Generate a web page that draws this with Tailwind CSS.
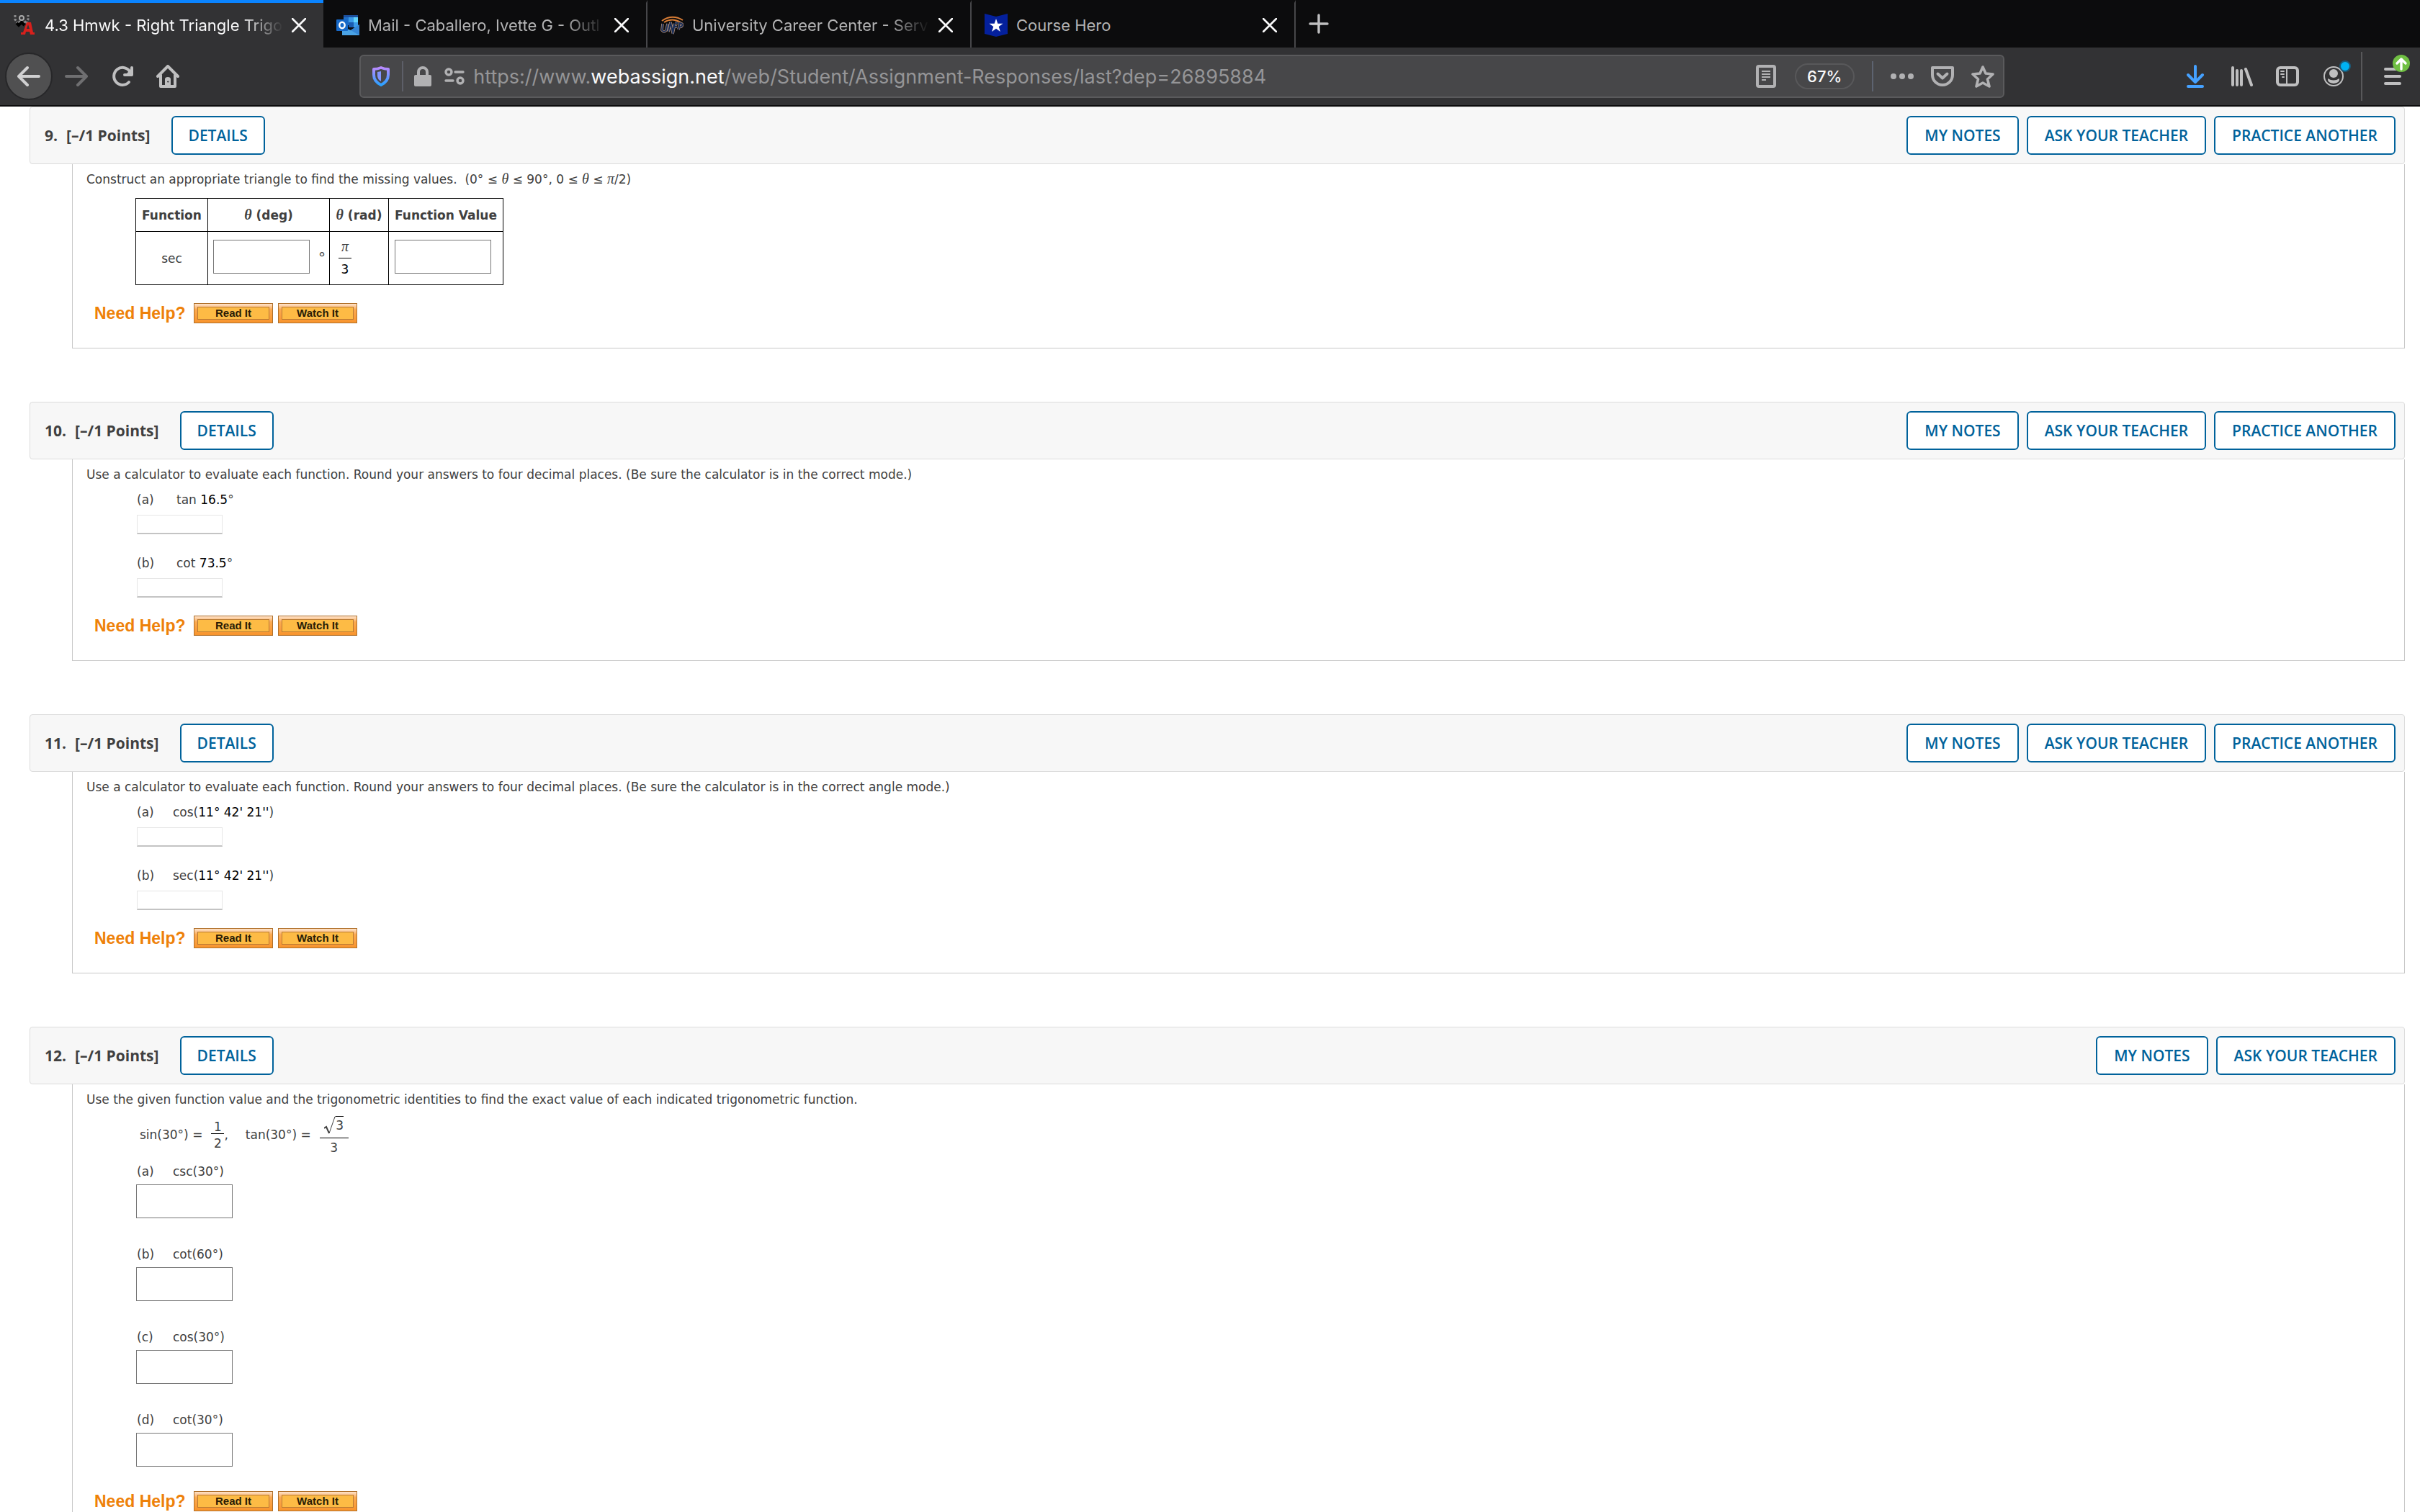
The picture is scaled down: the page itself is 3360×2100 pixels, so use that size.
<!DOCTYPE html>
<html lang="en">
<head>
    <meta charset="UTF-8">
    <meta name="viewport" content="width=device-width, initial-scale=1.0">
    <title>4.3 Hmwk - Right Triangle Trigonometry</title>
    <script src="https://cdn.jsdelivr.net/npm/@tailwindcss/browser@4"></script>
</head>
<body class="bg-white text-[#404040] min-h-screen overflow-hidden font-['DejaVu_Sans',sans-serif] text-[17px] leading-[35px]">
    <!-- Browser chrome -->
    <header class="font-['Inter',sans-serif] bg-[#323234] border-b-2 border-[#0c0c0d]">
        <!-- Tabs -->
        <nav class="flex h-[66px] bg-[#0c0c0d] text-[22px] leading-8 text-[#b4b4b5]">
            <div class="w-[449px] flex items-center gap-3 pl-[18px] pr-6 bg-[#323234] border-t-4 border-[#0a84ff] text-[#f9f9fa]">
                <svg class="size-8 shrink-0" viewBox="0 0 32 32">
                    <path d="M3 2v6l4 6 3-4 3 5 3-5 3 4 2-6V2" fill="none" stroke="#8b8b8c" stroke-width="3" stroke-dasharray="3 2"/>
                    <path d="M5 13l3 3 4-4 4 4" fill="none" stroke="#000" stroke-width="4"/>
                    <circle cx="12" cy="6" r="3" fill="none" stroke="#aaa" stroke-width="2"/>
                    <path d="M11 29h6l1-4h5l1 4h6v-3h-2L25 12h-6l-5 14h-3zM19 21l2-6 2 6z" fill="#d8201c"/>
                </svg>
                <span class="flex-1 overflow-hidden whitespace-nowrap [mask-image:linear-gradient(to_right,black_83%,transparent)]">4.3 Hmwk - Right Triangle Trigo</span>
                <button aria-label="Close tab"><svg class="size-5" viewBox="0 0 20 20" fill="none" stroke="#f9f9fa" stroke-width="2.6" stroke-linecap="round"><path d="M1 1l18 18M19 1L1 19"/></svg></button>
            </div>
            <div class="w-[450px] flex items-center gap-3 pl-[18px] pr-6 border-t-4 border-t-transparent border-r-2 border-r-[#47474a]">
                <svg class="size-8 shrink-0" viewBox="0 0 32 32">
                    <path d="M10 2h20v14H10z" fill="#1f6fc9"/>
                    <path d="M10 2h20v3H10z" fill="#1c4f9c"/>
                    <path d="M17 5h7v7h-7z" fill="#3b9be8"/><path d="M24 5h6v7h-6z" fill="#63d3fb"/>
                    <path d="M17 12h7v7h-7z" fill="#1a5cb0"/><path d="M24 12h6v7h-6z" fill="#3b9be8"/>
                    <path d="M8 18l12 5 12-8v15H8z" fill="#4aa3e6"/><path d="M20 23l12-8v15z" fill="#3586d6"/>
                    <rect x="0" y="8" width="16" height="16" rx="1" fill="#1769c8"/>
                    <ellipse cx="8" cy="16" rx="3.7" ry="4.2" fill="none" stroke="#fff" stroke-width="2.4"/>
                </svg>
                <span class="flex-1 overflow-hidden whitespace-nowrap [mask-image:linear-gradient(to_right,black_83%,transparent)]">Mail - Caballero, Ivette G - Outl</span>
                <button aria-label="Close tab"><svg class="size-5" viewBox="0 0 20 20" fill="none" stroke="#f9f9fa" stroke-width="2.6" stroke-linecap="round"><path d="M1 1l18 18M19 1L1 19"/></svg></button>
            </div>
            <div class="w-[450px] flex items-center gap-3 pl-[18px] pr-6 border-t-4 border-t-transparent border-r-2 border-r-[#47474a]">
                <svg class="size-8 shrink-0" viewBox="0 0 32 32" fill="none">
                    <path d="M2 10Q16 0 31 9M5 12Q16 5 28 12" stroke="#d97d35" stroke-width="2"/>
                    <path d="M3 14l-1 9q3 4 6 0l2-9M11 25l3-13 3 14 2-12M20 14l-3 14M20 13h4M19 18h4M25 22l2-9q6 1 2 5l-4 1" stroke="#a98a78" stroke-width="3.6"/>
                    <path d="M3 14l-1 9q3 4 6 0l2-9M11 25l3-13 3 14 2-12M20 14l-3 14M20 13h4M19 18h4M25 22l2-9q6 1 2 5l-4 1" stroke="#1b2f57" stroke-width="2"/>
                </svg>
                <span class="flex-1 overflow-hidden whitespace-nowrap [mask-image:linear-gradient(to_right,black_83%,transparent)]">University Career Center - Serv</span>
                <button aria-label="Close tab"><svg class="size-5" viewBox="0 0 20 20" fill="none" stroke="#f9f9fa" stroke-width="2.6" stroke-linecap="round"><path d="M1 1l18 18M19 1L1 19"/></svg></button>
            </div>
            <div class="w-[450px] flex items-center gap-3 pl-[18px] pr-6 border-t-4 border-t-transparent border-r-2 border-r-[#47474a]">
                <svg class="size-8 shrink-0" viewBox="0 0 32 32">
                    <path d="M0 0l16 4 16-4v28l-16 4-16-4z" fill="#04209c"/>
                    <path d="M16 7l2.3 6.8h7.2l-5.800 4.300 2.200 6.900L16 20.800 10.100 25l2.200-6.900-5.800-4.300h7.200z" fill="#fff"/>
                </svg>
                <span class="flex-1 overflow-hidden whitespace-nowrap">Course Hero</span>
                <button aria-label="Close tab"><svg class="size-5" viewBox="0 0 20 20" fill="none" stroke="#f9f9fa" stroke-width="2.6" stroke-linecap="round"><path d="M1 1l18 18M19 1L1 19"/></svg></button>
            </div>
            <button class="pl-[18px]" aria-label="New tab"><svg class="size-7" viewBox="0 0 28 28" fill="none" stroke="#bfbfc0" stroke-width="3.4" stroke-linecap="round"><path d="M14 2v24M2 14h24"/></svg></button>
        </nav>

        <!-- Toolbar -->
        <div class="flex items-center h-20 pl-[7px] pr-[26px] text-[#bfbfc0]">
            <button class="size-[66px] rounded-full bg-[#505051] border-2 border-[#272729] flex items-center justify-center" aria-label="Back">
                <svg class="size-8" viewBox="0 0 32 32" fill="none" stroke="#d0d0d1" stroke-width="4" stroke-linecap="round" stroke-linejoin="round"><path d="M30 16H3M14 4L2 16l12 12"/></svg>
            </button>
            <button class="ml-[17px]" aria-label="Forward">
                <svg class="size-8" viewBox="0 0 32 32" fill="none" stroke="#6f6f71" stroke-width="4" stroke-linecap="round" stroke-linejoin="round"><path d="M2 16h27M18 4l12 12-12 12"/></svg>
            </button>
            <button class="ml-8" aria-label="Reload">
                <svg class="size-8" viewBox="0 0 32 32" fill="none" stroke="currentColor" stroke-width="4" stroke-linecap="round"><path d="M25 24A12 12 0 1 1 26 9"/><path d="M29 4v10H19" stroke-linejoin="round"/><path d="M29 5v9H20z" fill="currentColor" stroke="none"/></svg>
            </button>
            <button class="ml-[31px]" aria-label="Home">
                <svg class="size-8" viewBox="0 0 32 32" fill="none" stroke="currentColor" stroke-width="4" stroke-linecap="round" stroke-linejoin="round"><path d="M2 16L16 2l14 14M6 14v16h20V14"/><path d="M12 30V20q0-3 4-3t4 3v10z" fill="currentColor" stroke="none"/><path d="M16 23h1v1h-1z" stroke="#323234" stroke-width="1"/></svg>
            </button>
            <div class="flex-1"></div>
            <div class="flex-[9] h-[60px] flex items-center rounded-md bg-[#474749] border-2 border-[#5a5a5c] pl-[15px] pr-3 text-[#b1b1b3]">
                <svg class="w-[26px] h-7 shrink-0" viewBox="0 0 26 28">
                    <defs><linearGradient id="shield" x1="0" y1="0" x2="0" y2="1"><stop offset="0" stop-color="#b98aff"/><stop offset="1" stop-color="#2aa0ff"/></linearGradient></defs>
                    <path d="M13 2q5 2 10 2v8q0 9-10 14Q3 21 3 12V4q5 0 10-2z" fill="none" stroke="url(#shield)" stroke-width="4" stroke-linejoin="round"/>
                    <path d="M13 7l-5 1v5q0 5 5 8z" fill="#8294ff"/>
                </svg>
                <span class="w-[2px] h-[42px] ml-4 bg-[#5d5f68]"></span>
                <svg class="w-6 h-7 ml-[15px] shrink-0" viewBox="0 0 24 28"><rect y="12" width="24" height="16" rx="2" fill="currentColor"/><path d="M6 14V8a6 6 0 0 1 12 0v6" fill="none" stroke="currentColor" stroke-width="4"/></svg>
                <svg class="w-7 h-6 ml-[18px] shrink-0" viewBox="0 0 28 24" fill="none" stroke="currentColor" stroke-width="3.400" stroke-linecap="round"><circle cx="6" cy="6" r="4"/><path d="M15 6h11M2 18h10"/><circle cx="22" cy="18" r="4"/></svg>
                <div role="textbox" aria-label="Address" contenteditable="true" class="flex-1 ml-3 pt-0.5 text-[27px] leading-8 text-[#959597] whitespace-nowrap">https://www.<span class="text-[#f9f9fa]">webassign.net</span>/web/Student/Assignment-Responses/last?dep=26895884</div>
                <button aria-label="Reader view"><svg class="w-7 h-8" viewBox="0 0 28 32" fill="none" stroke="currentColor"><rect x="2" y="2" width="24" height="28" rx="2" stroke-width="4"/><path d="M8 9h12M8 13h12M8 17h12M8 21h6" stroke-width="2"/></svg></button>
                <button class="ml-[26px] w-[83px] h-9 rounded-full border-2 border-[#58585a] text-[22px] leading-8 font-medium text-[#f9f9fa]">67%</button>
                <span class="w-[2px] h-[42px] ml-6 bg-[#5d6370]"></span>
                <button class="ml-6" aria-label="Page actions"><svg class="w-8 h-8" viewBox="0 0 32 32" fill="currentColor"><circle cx="4" cy="16" r="4"/><circle cx="16" cy="16" r="4"/><circle cx="28" cy="16" r="4"/></svg></button>
                <button class="ml-6" aria-label="Save to Pocket"><svg class="size-8" viewBox="0 0 32 32" fill="none" stroke="currentColor" stroke-width="4" stroke-linecap="round" stroke-linejoin="round"><path d="M2 4h28v10a14 14 0 0 1-28 0z"/><path d="M9.500 12.500l6.500 6 6.500-6"/></svg></button>
                <button class="ml-6" aria-label="Bookmark"><svg class="size-8" viewBox="0 0 32 32" fill="none" stroke="currentColor" stroke-width="3.600" stroke-linejoin="round"><path d="M16 3l4 9 10 1-7.500 7L25 30l-9-5-9 5 2.500-10L2 13l10-1z"/></svg></button>
            </div>
            <div class="flex-1"></div>
            <button class="ml-[3px]" aria-label="Downloads"><svg class="w-6 h-8" viewBox="0 0 24 32" fill="none" stroke="#45a1ff" stroke-width="4" stroke-linecap="round" stroke-linejoin="round"><path d="M12 2v22M2 14l10 10 10-10M2 30h20"/></svg></button>
            <button class="ml-[37px]" aria-label="Library"><svg class="w-8 h-7" viewBox="0 0 32 28" fill="none" stroke="currentColor" stroke-width="4" stroke-linecap="round"><path d="M3 2v24M9 6v20M15 6v20M21 4l8 22"/></svg></button>
            <button class="ml-[31px]" aria-label="Sidebar"><svg class="w-8 h-7" viewBox="0 0 32 28" fill="none" stroke="currentColor" stroke-linecap="round"><rect x="2" y="2" width="28" height="24" rx="4" stroke-width="4"/><path d="M15 4v20M7 7h4M7 11h4M9 15h2" stroke-width="2"/></svg></button>
            <button class="relative ml-[34px]" aria-label="Account">
                <svg class="size-7" viewBox="0 0 28 28"><circle cx="14" cy="14" r="13" fill="none" stroke="currentColor" stroke-width="2"/><circle cx="14" cy="10" r="6" fill="currentColor"/><path d="M6 17q8 5 16 0 1 6-8 7-9-1-8-7z" fill="currentColor"/></svg>
                <span class="absolute -top-2 -right-2.5 size-4 rounded-full border-2 border-[#1c5a78] bg-[#00b3f4]"></span>
            </button>
            <span class="w-[2px] h-[68px] ml-6 bg-[#58585a]"></span>
            <button class="relative ml-[30px]" aria-label="Menu">
                <svg class="w-6 h-6" viewBox="0 0 24 24" stroke="currentColor" stroke-width="4" stroke-linecap="round"><path d="M2 2h20M2 12h20M2 22h20"/></svg>
                <svg class="absolute -top-[18px] -right-3 size-6" viewBox="0 0 24 24" fill="none"><circle cx="12" cy="12" r="12" fill="#70bf43"/><path d="M12 20V6M6 12l6-6 6 6" stroke="#fff" stroke-width="3.400" stroke-linecap="round" stroke-linejoin="round"/></svg>
            </button>
        </div>
    </header>

    <!-- Questions -->
    <main class="ml-[41px] mr-[21px] flex flex-col gap-[74px]">
        <!-- Question 9 -->
        <section>
            <div class="flex items-center h-20 pl-5 pr-3 border border-[#dcdcdc] rounded-sm bg-[#f7f7f7] font-['Open_Sans',sans-serif] text-[21px]">
                <h2 class="flex gap-3 font-bold"><span>9.</span><span>[–/1 Points]</span></h2>
                <button class="ml-[29px] h-[54px] px-[22px] rounded-md border-2 border-[#00629b] bg-white text-[#00629b] font-semibold">DETAILS</button>
                <div class="ml-auto flex gap-[11px] text-[#00629b] font-semibold">
                    <button class="h-[54px] px-[23px] rounded-md border-2 border-[#00629b] bg-white">MY NOTES</button>
                    <button class="h-[54px] px-[23px] rounded-md border-2 border-[#00629b] bg-white">ASK YOUR TEACHER</button>
                    <button class="h-[54px] px-[23px] rounded-md border-2 border-[#00629b] bg-white">PRACTICE ANOTHER</button>
                </div>
            </div>
            <div class="ml-[59px] pl-[19px] pt-1 pb-[34px] border border-t-0 border-[#c8c8c8]">
                <p>Construct an appropriate triangle to find the missing values.&nbsp; (0° ≤ <i class="font-['Liberation_Serif',serif] text-[20px] leading-none">θ</i> ≤ 90°, 0 ≤ <i class="font-['Liberation_Serif',serif] text-[20px] leading-none">θ</i> ≤ <i class="font-['Liberation_Serif',serif] text-[20px] leading-none">π</i>/2)</p>
                <table class="ml-[68px] mt-2 border-collapse text-center">
                    <thead>
                        <tr class="h-[46px]">
                            <th class="w-[100px] pt-0.5 border border-black">Function</th>
                            <th class="w-[169px] pt-0.5 border border-black"><i class="font-['Liberation_Serif',serif] text-[20px] leading-none">θ</i> (deg)</th>
                            <th class="w-[82px] pt-0.5 border border-black"><i class="font-['Liberation_Serif',serif] text-[20px] leading-none">θ</i> (rad)</th>
                            <th class="w-[159px] pt-0.5 border border-black">Function Value</th>
                        </tr>
                    </thead>
                    <tbody>
                        <tr class="h-[74px]">
                            <td class="pt-0.5 border border-black">sec</td>
                            <td class="border border-black">
                                <div class="flex items-center pl-[7px] pb-1 gap-3">
                                    <input type="text" aria-label="Theta in degrees" class="w-[134px] h-[47px] border border-[#767676]">
                                    <span class="pt-1 text-[20px]">°</span>
                                </div>
                            </td>
                            <td class="border border-black">
                                <div class="w-[18px] ml-3 leading-[22px]">
                                    <div class="border-b border-black pb-1"><i class="font-['Liberation_Serif',serif] text-[20px] leading-none">π</i></div>
                                    <div class="text-black pt-1">3</div>
                                </div>
                            </td>
                            <td class="border border-black">
                                <div class="flex pl-2 pb-1">
                                    <input type="text" aria-label="Function value" class="w-[134px] h-[47px] border border-[#767676]">
                                </div>
                            </td>
                        </tr>
                    </tbody>
                </table>
                <div class="flex items-center h-7 mt-[25px] ml-[11px] gap-[7px] font-['Liberation_Sans',sans-serif] font-bold">
                    <span class="w-[131px] text-[23px] text-[#ee8109]">Need Help?</span>
                    <button class="w-[110px] h-7 p-1 border border-[#b0702a] bg-linear-to-b from-[#fde3cb] via-[#fbaa50] via-30% to-[#f8942c] text-[15px] leading-4 text-[#2a1c05]"><span class="block border border-[#b97a33] bg-[#fdbb45]">Read It</span></button>
                    <button class="w-[110px] h-7 p-1 border border-[#b0702a] bg-linear-to-b from-[#fde3cb] via-[#fbaa50] via-30% to-[#f8942c] text-[15px] leading-4 text-[#2a1c05]"><span class="block border border-[#b97a33] bg-[#fdbb45]">Watch It</span></button>
                </div>
            </div>
        </section>

        <!-- Question 10 -->
        <section>
            <div class="flex items-center h-20 pl-5 pr-3 border border-[#dcdcdc] rounded-sm bg-[#f7f7f7] font-['Open_Sans',sans-serif] text-[21px]">
                <h2 class="flex gap-3 font-bold"><span>10.</span><span>[–/1 Points]</span></h2>
                <button class="ml-[29px] h-[54px] px-[22px] rounded-md border-2 border-[#00629b] bg-white text-[#00629b] font-semibold">DETAILS</button>
                <div class="ml-auto flex gap-[11px] text-[#00629b] font-semibold">
                    <button class="h-[54px] px-[23px] rounded-md border-2 border-[#00629b] bg-white">MY NOTES</button>
                    <button class="h-[54px] px-[23px] rounded-md border-2 border-[#00629b] bg-white">ASK YOUR TEACHER</button>
                    <button class="h-[54px] px-[23px] rounded-md border-2 border-[#00629b] bg-white">PRACTICE ANOTHER</button>
                </div>
            </div>
            <div class="ml-[59px] pl-[19px] pt-1 pb-[34px] border border-t-0 border-[#c8c8c8]">
                <p>Use a calculator to evaluate each function. Round your answers to four decimal places. (Be sure the calculator is in the correct mode.)</p>
                <div class="ml-[70px] flex flex-col items-start gap-[23px]">
                    <div>
                        <label for="q10a" class="flex"><span class="w-[55px]">(a)</span><span>tan <span class="text-black">16.5</span>°</span></label>
                        <input id="q10a" type="text" class="block mt-[3px] w-[119px] h-[27px] border border-[#e6e6e6] border-b-2 border-b-[#c4c4c4]">
                    </div>
                    <div>
                        <label for="q10b" class="flex"><span class="w-[55px]">(b)</span><span>cot <span class="text-black">73.5</span>°</span></label>
                        <input id="q10b" type="text" class="block mt-[3px] w-[119px] h-[27px] border border-[#e6e6e6] border-b-2 border-b-[#c4c4c4]">
                    </div>
                </div>
                <div class="flex items-center h-7 mt-[25px] ml-[11px] gap-[7px] font-['Liberation_Sans',sans-serif] font-bold">
                    <span class="w-[131px] text-[23px] text-[#ee8109]">Need Help?</span>
                    <button class="w-[110px] h-7 p-1 border border-[#b0702a] bg-linear-to-b from-[#fde3cb] via-[#fbaa50] via-30% to-[#f8942c] text-[15px] leading-4 text-[#2a1c05]"><span class="block border border-[#b97a33] bg-[#fdbb45]">Read It</span></button>
                    <button class="w-[110px] h-7 p-1 border border-[#b0702a] bg-linear-to-b from-[#fde3cb] via-[#fbaa50] via-30% to-[#f8942c] text-[15px] leading-4 text-[#2a1c05]"><span class="block border border-[#b97a33] bg-[#fdbb45]">Watch It</span></button>
                </div>
            </div>
        </section>

        <!-- Question 11 -->
        <section>
            <div class="flex items-center h-20 pl-5 pr-3 border border-[#dcdcdc] rounded-sm bg-[#f7f7f7] font-['Open_Sans',sans-serif] text-[21px]">
                <h2 class="flex gap-3 font-bold"><span>11.</span><span>[–/1 Points]</span></h2>
                <button class="ml-[29px] h-[54px] px-[22px] rounded-md border-2 border-[#00629b] bg-white text-[#00629b] font-semibold">DETAILS</button>
                <div class="ml-auto flex gap-[11px] text-[#00629b] font-semibold">
                    <button class="h-[54px] px-[23px] rounded-md border-2 border-[#00629b] bg-white">MY NOTES</button>
                    <button class="h-[54px] px-[23px] rounded-md border-2 border-[#00629b] bg-white">ASK YOUR TEACHER</button>
                    <button class="h-[54px] px-[23px] rounded-md border-2 border-[#00629b] bg-white">PRACTICE ANOTHER</button>
                </div>
            </div>
            <div class="ml-[59px] pl-[19px] pt-1 pb-[34px] border border-t-0 border-[#c8c8c8]">
                <p>Use a calculator to evaluate each function. Round your answers to four decimal places. (Be sure the calculator is in the correct angle mode.)</p>
                <div class="ml-[70px] flex flex-col items-start gap-[23px]">
                    <div>
                        <label for="q11a" class="flex"><span class="w-[50px]">(a)</span><span>cos(<span class="text-black">11° 42' 21''</span>)</span></label>
                        <input id="q11a" type="text" class="block mt-[3px] w-[119px] h-[27px] border border-[#e6e6e6] border-b-2 border-b-[#c4c4c4]">
                    </div>
                    <div>
                        <label for="q11b" class="flex"><span class="w-[50px]">(b)</span><span>sec(<span class="text-black">11° 42' 21''</span>)</span></label>
                        <input id="q11b" type="text" class="block mt-[3px] w-[119px] h-[27px] border border-[#e6e6e6] border-b-2 border-b-[#c4c4c4]">
                    </div>
                </div>
                <div class="flex items-center h-7 mt-[25px] ml-[11px] gap-[7px] font-['Liberation_Sans',sans-serif] font-bold">
                    <span class="w-[131px] text-[23px] text-[#ee8109]">Need Help?</span>
                    <button class="w-[110px] h-7 p-1 border border-[#b0702a] bg-linear-to-b from-[#fde3cb] via-[#fbaa50] via-30% to-[#f8942c] text-[15px] leading-4 text-[#2a1c05]"><span class="block border border-[#b97a33] bg-[#fdbb45]">Read It</span></button>
                    <button class="w-[110px] h-7 p-1 border border-[#b0702a] bg-linear-to-b from-[#fde3cb] via-[#fbaa50] via-30% to-[#f8942c] text-[15px] leading-4 text-[#2a1c05]"><span class="block border border-[#b97a33] bg-[#fdbb45]">Watch It</span></button>
                </div>
            </div>
        </section>

        <!-- Question 12 -->
        <section>
            <div class="flex items-center h-20 pl-5 pr-3 border border-[#dcdcdc] rounded-sm bg-[#f7f7f7] font-['Open_Sans',sans-serif] text-[21px]">
                <h2 class="flex gap-3 font-bold"><span>12.</span><span>[–/1 Points]</span></h2>
                <button class="ml-[29px] h-[54px] px-[22px] rounded-md border-2 border-[#00629b] bg-white text-[#00629b] font-semibold">DETAILS</button>
                <div class="ml-auto flex gap-[11px] text-[#00629b] font-semibold">
                    <button class="h-[54px] px-[23px] rounded-md border-2 border-[#00629b] bg-white">MY NOTES</button>
                    <button class="h-[54px] px-[23px] rounded-md border-2 border-[#00629b] bg-white">ASK YOUR TEACHER</button>
                </div>
            </div>
            <div class="ml-[59px] pl-[19px] pt-1 pb-[34px] border border-t-0 border-[#c8c8c8]">
                <p>Use the given function value and the trigonometric identities to find the exact value of each indicated trigonometric function.</p>
                <div class="flex items-center h-[65px] pb-0.5 ml-[74px]">
                    <span>sin(30°) =</span>
                    <span class="ml-3 w-[18px] text-center leading-[18px]">
                        <span class="block border-b border-black">1</span>
                        <span class="block pt-1">2</span>
                    </span>
                    <span>,</span>
                    <span class="ml-6">tan(30°) =</span>
                    <span class="ml-3 w-10 text-center leading-[18px]">
                        <span class="flex justify-center pb-1.5 border-b border-black">
                            <svg class="w-4 h-7 -mb-1" viewBox="0 0 16 28" fill="none" stroke="#404040"><path d="M0 17l3-2 4 9" stroke-width="2"/><path d="M7 24L15 1h1" stroke-width="1"/></svg>
                            <span class="border-t border-black pt-[3px]">3</span>
                        </span>
                        <span class="block pt-1">3</span>
                    </span>
                </div>
                <div class="ml-[69px] flex flex-col items-start gap-[33px]">
                    <div>
                        <label for="q12a" class="flex pl-px"><span class="w-[50px]">(a)</span><span>csc(30°)</span></label>
                        <input id="q12a" type="text" class="block w-[134px] h-[47px] border border-[#767676]">
                    </div>
                    <div>
                        <label for="q12b" class="flex pl-px"><span class="w-[50px]">(b)</span><span>cot(60°)</span></label>
                        <input id="q12b" type="text" class="block w-[134px] h-[47px] border border-[#767676]">
                    </div>
                    <div>
                        <label for="q12c" class="flex pl-px"><span class="w-[50px]">(c)</span><span>cos(30°)</span></label>
                        <input id="q12c" type="text" class="block w-[134px] h-[47px] border border-[#767676]">
                    </div>
                    <div>
                        <label for="q12d" class="flex pl-px"><span class="w-[50px]">(d)</span><span>cot(30°)</span></label>
                        <input id="q12d" type="text" class="block w-[134px] h-[47px] border border-[#767676]">
                    </div>
                </div>
                <div class="flex items-center h-7 mt-[34px] ml-[11px] gap-[7px] font-['Liberation_Sans',sans-serif] font-bold">
                    <span class="w-[131px] text-[23px] text-[#ee8109]">Need Help?</span>
                    <button class="w-[110px] h-7 p-1 border border-[#b0702a] bg-linear-to-b from-[#fde3cb] via-[#fbaa50] via-30% to-[#f8942c] text-[15px] leading-4 text-[#2a1c05]"><span class="block border border-[#b97a33] bg-[#fdbb45]">Read It</span></button>
                    <button class="w-[110px] h-7 p-1 border border-[#b0702a] bg-linear-to-b from-[#fde3cb] via-[#fbaa50] via-30% to-[#f8942c] text-[15px] leading-4 text-[#2a1c05]"><span class="block border border-[#b97a33] bg-[#fdbb45]">Watch It</span></button>
                </div>
            </div>
        </section>
    </main>
</body>
</html>
